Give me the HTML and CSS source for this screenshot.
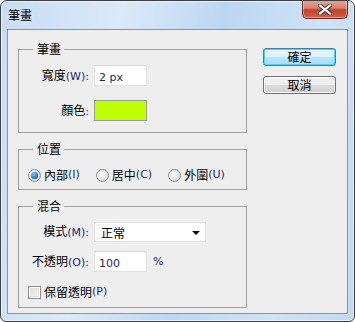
FILE: index.html
```html
<!DOCTYPE html>
<html lang="zh-Hant">
<head>
    <meta charset="UTF-8">
    <meta name="viewport" content="width=device-width, initial-scale=1.0">
    <title>筆畫</title>
    <link rel="stylesheet" href="styles.css">
</head>
<body>
    <div class="window">
        <div class="titlebar">
            <div class="title">筆畫</div>
            <div class="close-btn">
                <svg width="14" height="11" viewBox="0 0 14 11">
                    <path d="M2 1.5 L12 9.5 M12 1.5 L2 9.5" stroke="#3b3b3b" stroke-width="4.2" stroke-linecap="square"/>
                    <path d="M2 1.5 L12 9.5 M12 1.5 L2 9.5" stroke="#ffffff" stroke-width="2.2" stroke-linecap="square"/>
                </svg>
            </div>
        </div>

        <div class="client">
            <div class="groups">
                <fieldset class="group">
                    <legend>筆畫</legend>
                    <div class="fields stroke-fields">
                        <label class="label">寬度<span class="en">(W):</span></label>
                        <div class="field"><span class="en">2 px</span></div>
                        <label class="label">顏色<span class="en">:</span></label>
                        <div class="swatch"></div>
                    </div>
                </fieldset>

                <fieldset class="group">
                    <legend>位置</legend>
                    <div class="radios">
                        <div class="option"><span class="radio checked"></span>內部<span class="en">(I)</span></div>
                        <div class="option"><span class="radio"></span>居中<span class="en">(C)</span></div>
                        <div class="option"><span class="radio"></span>外圍<span class="en">(U)</span></div>
                    </div>
                </fieldset>

                <fieldset class="group">
                    <legend>混合</legend>
                    <div class="fields blend-fields">
                        <label class="label">模式<span class="en">(M):</span></label>
                        <div class="select">正常<span class="arrow"></span></div>
                        <label class="label">不透明<span class="en">(O):</span></label>
                        <div class="with-unit">
                            <div class="field"><span class="en">100</span></div>
                            <span class="unit en">%</span>
                        </div>
                    </div>
                    <div class="check-row">
                        <span class="checkbox"></span>保留透明<span class="en">(P)</span>
                    </div>
                </fieldset>
            </div>

            <div class="buttons">
                <div class="button default">確定</div>
                <div class="button">取消</div>
            </div>
        </div>
    </div>
</body>
</html>
```

FILE: styles.css
```css
body {
    margin: 0;
    padding: 0;
    background-color: #ffffff;
    font-family: "Noto Sans", "Noto Sans CJK TC", sans-serif;
    font-size: 12px;
    line-height: 16px;
    color: #000000;
}
.window {
    width: 355px;
    height: 322px;
    box-sizing: border-box;
    border: 1px solid #3c4046;
    border-radius: 7px 7px 6px 6px;
    background: linear-gradient(100deg, #c6dcf2 0%, #dbe9f8 30%, #bcd7f3 55%, #cfe2f6 80%, #c2d9f1 100%);
    box-shadow: inset 0 0 0 1px #e9f2fb;
    display: flex;
    flex-direction: column;
    padding: 0 6px 7px 6px;
    overflow: hidden;
}
.titlebar {
    height: 28px;
    display: flex;
    justify-content: space-between;
    align-items: flex-start;
    flex-shrink: 0;
}
.title {
    padding: 6px 0 0 1px;
    font-family: "Noto Sans CJK TC", sans-serif;
    color: #000000;
    text-shadow: 0 0 6px #eef5fd;
}
.close-btn {
    width: 46px;
    height: 19px;
    box-sizing: border-box;
    margin-top: -1px;
    border: 1px solid #6d2c23;
    border-top: none;
    border-radius: 0 0 5px 5px;
    background: linear-gradient(#e9a995 0%, #d98070 45%, #c0402c 55%, #d1614a 100%);
    box-shadow: inset 0 0 0 1px rgba(255, 220, 210, 0.45);
    display: flex;
    justify-content: center;
    align-items: center;
}
.client {
    flex: 1;
    border: 1px solid #8494a9;
    background-color: #eeeeee;
    display: flex;
    padding: 11px 0 0 10px;
}
.groups {
    width: 229px;
    display: flex;
    flex-direction: column;
}
.group {
    margin: 0;
    padding: 0;
    border: 1px solid #a0a0a0;
    font-family: "Noto Sans CJK TC", sans-serif;
}
.group + .group {
    margin-top: 8px;
}
.group legend {
    margin-left: 14px;
    padding: 0 4px;
    line-height: 16px;
}
.en {
    font-family: "DejaVu Sans", sans-serif;
    font-size: 11px;
    color: #17286a;
}
.fields {
    display: grid;
    grid-template-columns: 70px auto;
    column-gap: 5px;
    align-items: center;
    justify-items: start;
}
.stroke-fields {
    row-gap: 14px;
    padding: 8px 0 11px 0;
}
.blend-fields {
    row-gap: 9px;
    padding: 8px 0 0 0;
}
.label {
    justify-self: end;
    white-space: nowrap;
}
.field {
    width: 53px;
    height: 21px;
    box-sizing: border-box;
    border: 1px solid #e1e3e6;
    border-top-color: #d6d8db;
    background-color: #ffffff;
    padding: 1px 0 0 4px;
    line-height: 17px;
}
.swatch {
    width: 53px;
    height: 21px;
    box-sizing: border-box;
    border: 1px solid #9b9b9b;
    background-color: #bfff00;
}
.select {
    width: 112px;
    height: 20px;
    box-sizing: border-box;
    border: 1px solid #e1e3e6;
    background-color: #ffffff;
    padding: 1px 0 0 6px;
    line-height: 16px;
    display: flex;
    justify-content: space-between;
    align-items: center;
}
.arrow {
    width: 0;
    height: 0;
    margin-right: 5px;
    border-left: 4px solid transparent;
    border-right: 4px solid transparent;
    border-top: 4px solid #111111;
}
.with-unit {
    display: flex;
    align-items: center;
}
.unit {
    margin-left: 6px;
}
.radios {
    display: flex;
    gap: 16px;
    padding: 10px 0 6px 9px;
}
.option, .check-row {
    display: flex;
    align-items: center;
    height: 16px;
    white-space: nowrap;
}
.radio {
    width: 13px;
    height: 13px;
    box-sizing: border-box;
    border-radius: 50%;
    border: 1px solid #8d9093;
    background: radial-gradient(circle at 40% 35%, #ffffff 0%, #e6e7e8 50%, #c8cacc 100%);
    margin-right: 3px;
    display: flex;
    justify-content: center;
    align-items: center;
}
.radio.checked::after {
    content: "";
    width: 7px;
    height: 7px;
    border-radius: 50%;
    background: radial-gradient(circle at 40% 35%, #8fd3f7 0%, #2c7dc0 50%, #163f73 100%);
}
.check-row {
    padding: 12px 0 7px 9px;
}
.checkbox {
    width: 13px;
    height: 13px;
    box-sizing: border-box;
    border: 1px solid #8f8f8f;
    background: linear-gradient(135deg, #dcdcdc 0%, #f4f4f4 100%);
    box-shadow: inset 0 0 0 1px #ffffff, inset 0 0 0 2px #e4e4e4;
    margin-right: 3px;
}
.buttons {
    margin: 7px 0 0 16px;
    display: flex;
    flex-direction: column;
    gap: 10px;
}
.button {
    width: 73px;
    height: 18px;
    box-sizing: border-box;
    border: 1px solid #707070;
    border-radius: 3px;
    background: linear-gradient(#f3f3f3 0%, #ebebeb 50%, #dddddd 51%, #cfcfcf 100%);
    box-shadow: inset 0 0 0 1px #fbfbfb;
    font-family: "Noto Sans CJK TC", sans-serif;
    text-align: center;
    line-height: 15px;
}
.button.default {
    border-color: #3c7fb1;
    background: linear-gradient(#eaf6fd 0%, #d9f0fc 50%, #bee6fd 51%, #a7d9f5 100%);
    box-shadow: inset 0 0 0 1px #48d5fb;
}
```
